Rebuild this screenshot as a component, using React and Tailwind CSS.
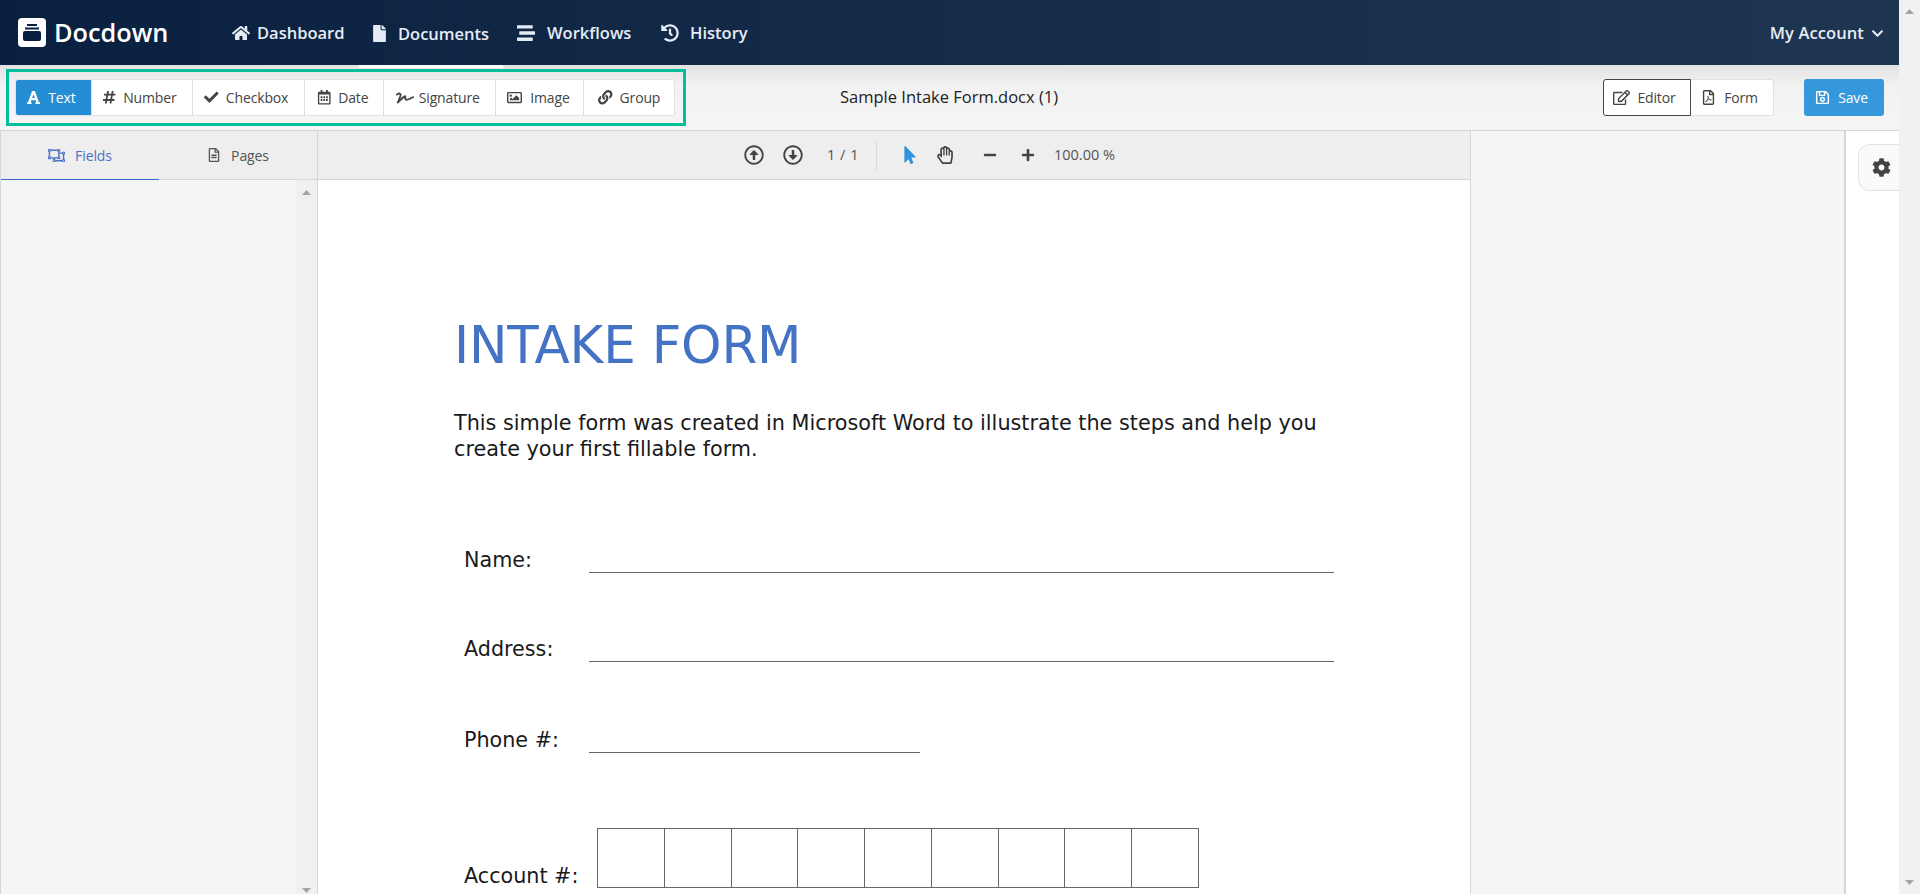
import React from "react";
import {
  FaHome, FaFile, FaStream, FaHistory, FaChevronDown, FaFont, FaHashtag, FaCheck,
  FaRegCalendarAlt, FaSignature, FaRegImage, FaLink, FaRegObjectUngroup, FaRegFileAlt,
  FaRegArrowAltCircleUp, FaRegArrowAltCircleDown, FaMousePointer, FaRegHandPaper, FaMinus,
  FaPlus, FaCog, FaRegEdit, FaRegFilePdf, FaRegSave,
} from "react-icons/fa";

const UI = "font-['Open_Sans','Noto_Sans',sans-serif]";

function NavItem({ icon: Icon, label, iconCls, gap, textCls = "pt-[1px]" }) {
  return (
    <a className={`flex items-center text-[16.5px] font-semibold text-[#e6ecf5] ${gap}`}>
      <Icon className={iconCls} />
      <span className={textCls}>{label}</span>
    </a>
  );
}

function Tool({ icon: Icon, label, w, active, iconCls = "text-[14.5px]", gap = "gap-[7px]", last }) {
  return (
    <button
      className={`flex h-full items-center justify-center text-[14px] tracking-[-0.15px] ${w} ${gap} ${
        active ? "bg-[#248dd3] text-white" : "text-[#444]"
      } ${last ? "" : "border-r border-[#dedede]"}`}
    >
      <Icon className={iconCls} />
      <span>{label}</span>
    </button>
  );
}

function FormRow({ label, line, cls }) {
  return (
    <div className={`flex items-end ${cls}`}>
      <span className="mb-[1px] w-[135px] pl-[10px] text-[20.7px] leading-[24px] text-[#1a1a1a]">{label}</span>
      <span className={`h-[1.5px] bg-[#666] ${line}`} />
    </div>
  );
}

function Arrow({ down }) {
  return (
    <svg width="9" height="5" viewBox="0 0 9 5" className="block">
      <polygon points={down ? "0,0 9,0 4.5,5" : "0,5 9,5 4.5,0"} fill="#a3a3a3" />
    </svg>
  );
}

export default function App() {
  return (
    <div className={`flex h-[894px] w-full overflow-hidden bg-white ${UI}`}>
      <div className="flex min-w-0 flex-1 flex-col">
        <header className="flex h-[65px] shrink-0 items-center bg-gradient-to-r from-[#0a2040] to-[#1f3652] pr-[15px] pl-[18px]">
          <div className="flex h-[29px] w-[28px] items-center justify-center rounded-[4px] bg-white">
            <svg width="18" height="17" viewBox="0 0 18 17">
              <rect x="4" y="0" width="10" height="2" fill="#0a2040" />
              <rect x="2" y="3.5" width="14" height="2" fill="#0a2040" />
              <rect x="0" y="7" width="18" height="10" rx="2" fill="#0a2040" />
            </svg>
          </div>
          <span className="ml-[8px] w-[178px] text-[25.3px] font-semibold text-white">Docdown</span>
          <nav className="flex items-center">
            <NavItem icon={FaHome} label="Dashboard" iconCls="text-[18px]" gap="gap-[7px] w-[139px]" />
            <NavItem icon={FaFile} label="Documents" iconCls="text-[17px] mt-[2px]" gap="gap-[10px] w-[146px]" textCls="pt-[3px]" />
            <NavItem icon={FaStream} label="Workflows" iconCls="text-[18px]" gap="gap-[12px] w-[144px]" />
            <NavItem icon={FaHistory} label="History" iconCls="text-[18px]" gap="gap-[11px]" />
          </nav>
          <div className="ml-auto flex items-center gap-[7px] pt-[1px] text-[16.5px] font-semibold tracking-[0.1px] text-[#e6ecf5]">
            My Account
            <FaChevronDown className="text-[13px]" />
          </div>
        </header>

        <div className="relative flex h-[66px] shrink-0 items-center border-b border-[#d6d6d6] bg-[linear-gradient(#e2e2e2,#f2f2f2_30%,#f5f5f5)] pr-[15px] pl-[6px]">
          <span className="absolute top-0 left-[359px] h-[3px] w-[144px] bg-white" />
          <div className="flex h-[57px] w-[680px] items-center border-[3px] border-[#00bf9a] pl-[6px]">
            <div className="flex h-[37px] w-[660px] overflow-hidden rounded-[3px] border border-[#e2e2e2] bg-white">
              <Tool icon={FaFont} label="Text" w="w-[76px] pr-[5px]" active iconCls="text-[15px]" />
              <Tool icon={FaHashtag} label="Number" w="w-[102px] pr-[6px]" />
              <Tool icon={FaCheck} label="Checkbox" w="w-[112px] pr-[5px]" />
              <Tool icon={FaRegCalendarAlt} label="Date" w="w-[79px] pr-[3px]" />
              <Tool icon={FaSignature} label="Signature" w="w-[112px] pr-[3px]" iconCls="text-[18px]" gap="gap-[5px]" />
              <Tool icon={FaRegImage} label="Image" w="w-[89px] pr-[2px]" iconCls="text-[15px]" gap="gap-[8px]" />
              <Tool icon={FaLink} label="Group" w="w-[90px]" last />
            </div>
          </div>
          <div className="ml-[154px] text-[16.5px] text-[#222]">Sample Intake Form.docx (1)</div>
          <div className="ml-auto flex h-[37px] w-[171px] text-[14px] tracking-[-0.15px] text-[#444]">
            <button className="flex w-[88px] items-center justify-center gap-[7px] rounded-l-[3px] border border-[#444] bg-white pr-[5px]">
              <FaRegEdit className="text-[17px]" /> Editor
            </button>
            <button className="flex flex-1 items-center justify-center gap-[8px] rounded-r-[3px] border border-l-0 border-[#e0e0e0] bg-white pr-[5px]">
              <FaRegFilePdf className="text-[15px]" /> Form
            </button>
          </div>
          <button className="ml-[30px] flex h-[37px] w-[80px] items-center justify-center gap-[8px] rounded-[3px] bg-[#3498db] pr-[5px] text-[14px] tracking-[-0.15px] text-white">
            <FaRegSave className="text-[15px]" /> Save
          </button>
        </div>

        <div className="flex min-h-0 flex-1">
          <aside className="flex w-[318px] shrink-0 flex-col border-r border-l border-[#d6d6d6] bg-[#f5f5f5]">
            <div className="flex h-[49px] shrink-0 border-b border-[#d6d6d6] bg-[#eeeeee] text-[14px] tracking-[-0.1px]">
              <div className="mb-[-1px] flex w-[158px] items-center justify-center gap-[10px] border-b border-[#3b6cc4] text-[#4a72c4]">
                <FaRegObjectUngroup className="text-[17px]" /> Fields
              </div>
              <div className="flex flex-1 items-center justify-center gap-[10px] text-[#555]">
                <FaRegFileAlt className="text-[14px]" /> Pages
              </div>
            </div>
            <div className="flex min-h-0 flex-1 justify-end">
              <div className="flex w-[21px] flex-col items-center justify-between bg-[#f0f0f0] pt-[10px] pb-[1px]">
                <Arrow />
                <Arrow down />
              </div>
            </div>
          </aside>

          <main className="flex w-[1153px] shrink-0 flex-col border-r border-[#d6d6d6]">
            <div className="flex h-[49px] shrink-0 items-center border-b border-[#d6d6d6] bg-[#eeeeee] text-[14.5px] text-[#555]">
              <div className="flex items-center pl-[426px]">
                <FaRegArrowAltCircleUp className="text-[20px] text-[#444]" />
                <FaRegArrowAltCircleDown className="ml-[19px] text-[20px] text-[#444]" />
                <span className="ml-[24px] w-[30px] text-center tracking-[0.5px] whitespace-nowrap">1 / 1</span>
                <span className="mx-[19px] h-[30px] w-px bg-[#d9d9d9]" />
                <FaMousePointer className="ml-[5px] text-[18px] text-[#2d93dc]" />
                <FaRegHandPaper className="ml-[17px] text-[18px] text-[#444]" />
                <FaMinus className="ml-[29px] text-[14px] text-[#444]" />
                <FaPlus className="ml-[24px] text-[14px] text-[#444]" />
                <span className="ml-[19px]">100.00 %</span>
              </div>
            </div>
            <div className="min-h-0 flex-1 overflow-hidden bg-white pt-[135px] pl-[136px] font-['DejaVu_Sans',sans-serif]">
              <h1 className="text-[51.5px] leading-[60px] tracking-[-0.2px] text-[#4472c4]">INTAKE FORM</h1>
              <p className="mt-[35px] w-[900px] text-[20.78px] leading-[26px] text-[#1a1a1a]">
                This simple form was created in Microsoft Word to illustrate the steps and help you
                <br />
                create your first fillable form.
              </p>
              <FormRow label="Name:" line="w-[745px]" cls="mt-[86px]" />
              <FormRow label="Address:" line="w-[745px]" cls="mt-[64px]" />
              <FormRow label="Phone #:" line="w-[331px]" cls="mt-[66px]" />
              <div className="mt-[75px] flex items-end">
                <span className="w-[143px] pl-[10px] text-[20.7px] leading-[24px] text-[#1a1a1a]">Account #:</span>
                <div className="flex h-[60px] w-[602px] border border-[#666]">
                  {Array.from({ length: 9 }).map((_, i) => (
                    <span key={i} className="flex-1 border-r border-[#666] last:border-r-0" />
                  ))}
                </div>
              </div>
            </div>
          </main>

          <div className="flex-1 bg-[#f5f5f5]" />

          <div className="relative w-[55px] shrink-0 border-l-2 border-[#d6d6d6] bg-white">
            <div className="absolute top-[13px] left-[12px] flex h-[47px] w-[41px] items-center justify-start rounded-l-[12px] border border-r-0 border-[#e2e2e2] bg-[#fafafa] pl-[13px]">
              <FaCog className="text-[19px] text-[#444]" />
            </div>
          </div>
        </div>
      </div>

      <div className="flex w-[21px] shrink-0 flex-col items-center justify-between bg-[#f1f1f1] pt-[9px] pb-[9px]">
        <Arrow />
        <Arrow down />
      </div>
    </div>
  );
}
